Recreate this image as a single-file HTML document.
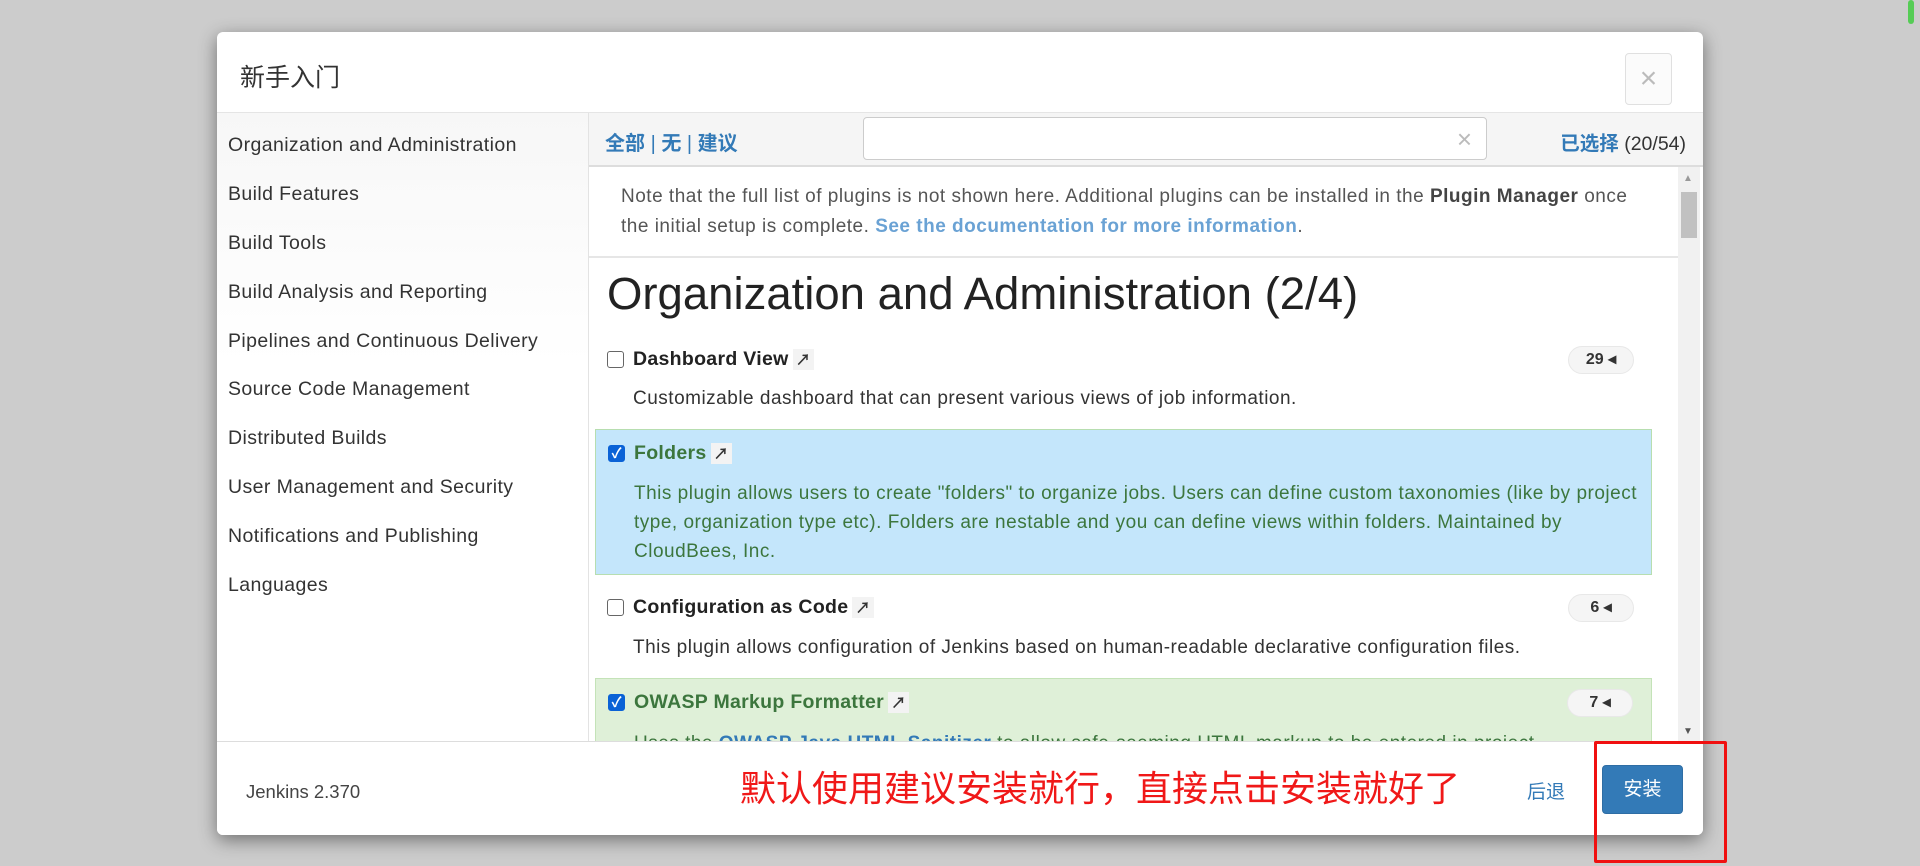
<!DOCTYPE html>
<html><head><meta charset="utf-8"><style>
*{box-sizing:border-box;margin:0;padding:0}
body{width:1920px;height:866px;background:#cccccc;font-family:"Liberation Sans","Noto Sans CJK SC",sans-serif;color:#333;position:relative;overflow:hidden}
.modal{position:absolute;left:217px;top:32px;width:1486px;height:803px;background:#fff;border-radius:6px;box-shadow:0 5px 18px rgba(0,0,0,.45);overflow:hidden}
.hdr{position:absolute;left:0;top:0;width:100%;height:81px;border-bottom:1px solid #e5e5e5}
.hdr .t{position:absolute;left:23px;top:26px;font-size:25px;color:#333}
.close{position:absolute;left:1408px;top:21px;width:47px;height:52px;border:1px solid #e0e0e0;border-radius:4px;background:#fbfbfb;color:#bbb;font-size:30px;text-align:center;line-height:50px}
.side{position:absolute;left:0;top:81px;width:372px;height:628px;background:linear-gradient(180deg,#f7f7f7,#fff 40%);border-right:1px solid #e3e3e3}
.side div{position:absolute;left:11px;font-size:19.5px;letter-spacing:0.4px;color:#333}
.tb{position:absolute;left:372px;top:81px;width:1114px;height:54px;background:#f5f5f5;border-bottom:2px solid #ddd}
.lnk{color:#337ab7;font-weight:bold}
.content{position:absolute;left:372px;top:135px;width:1114px;height:574px;overflow:hidden}
.sb{position:absolute;right:3px;top:0;width:22px;height:574px;background:#f1f1f1}
.note{position:absolute;left:32px;top:15px;width:1028px;font-size:19px;letter-spacing:0.5px;line-height:30px;color:#555}
.note b{color:#444}
.note a{color:#6aa2d4;font-weight:bold;text-decoration:none}
.h{position:absolute;left:18px;top:101px;font-size:45.5px;color:#222}
.row{position:absolute;left:6px;width:1057px}
.cb{position:absolute;left:12px;width:17px;height:17px;border:1.5px solid #666;border-radius:3px;background:#fff}
.cb.on{background:#0a62d6;border-color:#0a62d6;color:#fff;font-size:14px;text-align:center;line-height:15px;font-weight:bold}
.title{position:absolute;left:38px;font-size:19.5px;letter-spacing:0.3px;font-weight:bold;color:#222}
.ar{display:inline-block;background:#f3f3f3;font-size:15px;padding:0 3px;margin-left:4px;color:#333}
.desc{position:absolute;left:38px;font-size:19px;letter-spacing:0.5px;line-height:29px;color:#333;width:1020px}
.badge{position:absolute;right:18px;width:66px;height:28px;border-radius:14px;background:#f5f5f5;border:1px solid #e8e8e8;font-size:16px;font-weight:bold;text-align:center;line-height:26px;color:#333}
.g{color:#3c763d}
.ftr{position:absolute;left:0;top:709px;width:100%;height:94px;border-top:1px solid #ddd;background:#fff}
</style></head><body>
<div style="position:absolute;left:1908px;top:0;width:6px;height:24px;background:#5c5;border-radius:3px"></div>
<div class="modal">
 <div class="hdr"><div class="t">新手入门</div><div class="close">×</div></div>
 <div class="side">
  <div style="top:21px">Organization and Administration</div>
  <div style="top:70px">Build Features</div>
  <div style="top:119px">Build Tools</div>
  <div style="top:168px">Build Analysis and Reporting</div>
  <div style="top:217px">Pipelines and Continuous Delivery</div>
  <div style="top:265px">Source Code Management</div>
  <div style="top:314px">Distributed Builds</div>
  <div style="top:363px">User Management and Security</div>
  <div style="top:412px">Notifications and Publishing</div>
  <div style="top:461px">Languages</div>
 </div>
 <div class="tb">
  <div style="position:absolute;left:16px;top:14px;font-size:20px"><span class="lnk">全部</span> <span style="color:#337ab7">|</span> <span class="lnk">无</span> <span style="color:#337ab7">|</span> <span class="lnk">建议</span></div>
  <div style="position:absolute;left:274px;top:4px;width:624px;height:43px;background:#fff;border:1px solid #ccc;border-radius:4px"><span style="position:absolute;right:14px;top:6px;color:#bbb;font-size:26px">×</span></div>
  <div style="position:absolute;right:17px;top:14px;font-size:19.5px"><span class="lnk">已选择</span> (20/54)</div>
 </div>
 <div class="content">
  <div class="note">Note that the full list of plugins is not shown here. Additional plugins can be installed in the <b>Plugin Manager</b> once the initial setup is complete. <a>See the documentation for more information</a>.</div>
  <div style="position:absolute;left:0;top:89px;width:1089px;height:2px;background:#e6e6e6"></div>
  <div class="h">Organization and Administration (2/4)</div>
  <div class="row" style="top:169px;height:88px">
   <div class="cb" style="top:15px"></div>
   <div class="title" style="top:12px">Dashboard View<span class="ar">↗</span></div>
   <div class="badge" style="top:10px">29 ◂</div>
   <div class="desc" style="top:48px">Customizable dashboard that can present various views of job information.</div>
  </div>
  <div class="row" style="top:262px;height:146px;background:#c4e6fb;border:1px solid #b7deb0">
   <div class="cb on" style="top:15px">✓</div>
   <div class="title g" style="top:12px">Folders<span class="ar">↗</span></div>
   <div class="desc g" style="top:49px">This plugin allows users to create "folders" to organize jobs. Users can define custom taxonomies (like by project type, organization type etc). Folders are nestable and you can define views within folders. Maintained by CloudBees, Inc.</div>
  </div>
  <div class="row" style="top:417px;height:88px">
   <div class="cb" style="top:15px"></div>
   <div class="title" style="top:12px">Configuration as Code<span class="ar">↗</span></div>
   <div class="badge" style="top:10px">6 ◂</div>
   <div class="desc" style="top:49px">This plugin allows configuration of Jenkins based on human-readable declarative configuration files.</div>
  </div>
  <div class="row" style="top:511px;height:80px;background:#dff0d8;border:1px solid #c4e3b8">
   <div class="cb on" style="top:15px">✓</div>
   <div class="title g" style="top:12px">OWASP Markup Formatter<span class="ar">↗</span></div>
   <div class="badge" style="top:10px">7 ◂</div>
   <div class="desc g" style="top:50px">Uses the <b style="color:#337ab7">OWASP Java HTML Sanitizer</b> to allow safe-seeming HTML markup to be entered in project</div>
  </div>
  <div class="sb"><div style="position:absolute;left:3px;top:25px;width:16px;height:46px;background:#c1c1c1"></div>
   <div style="position:absolute;left:5px;top:6px;font-size:10px;color:#999">▲</div>
   <div style="position:absolute;left:5px;bottom:4px;font-size:10px;color:#555">▼</div></div>
 </div>
 <div class="ftr">
  <div style="position:absolute;left:29px;top:39px;font-size:18.5px;color:#444">Jenkins 2.370</div>
  <div style="position:absolute;left:523px;top:18px;font-size:36px;color:#f01818">默认使用建议安装就行，直接点击安装就好了</div>
  <div style="position:absolute;left:1310px;top:35px;font-size:19px;color:#337ab7">后退</div>
  <div style="position:absolute;left:1385px;top:23px;width:81px;height:49px;background:#337ab7;border:1px solid #2e6da4;border-radius:4px;color:#fff;font-size:19px;text-align:center;line-height:47px">安装</div>
 </div>
</div>
<div style="position:absolute;left:1594px;top:741px;width:133px;height:122px;border:3px solid #f01010;border-radius:2px"></div>
</body></html>
